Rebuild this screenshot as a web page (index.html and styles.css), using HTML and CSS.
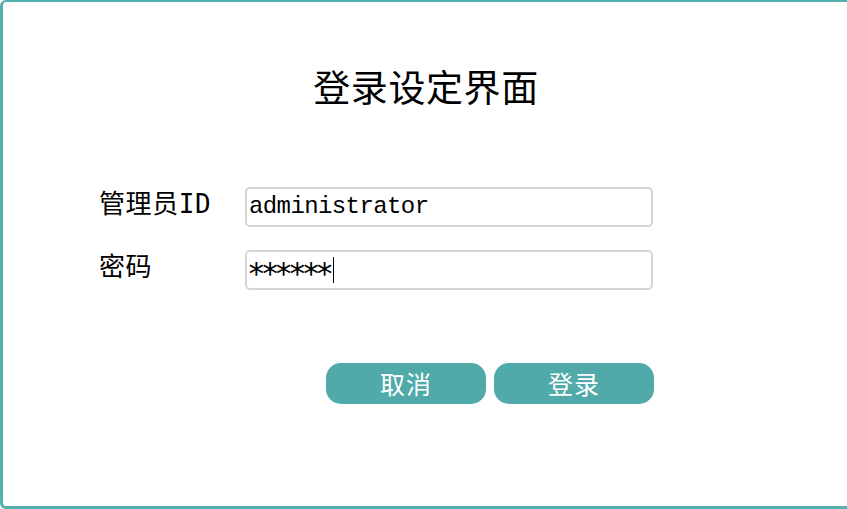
FILE: index.html
```html
<!DOCTYPE html>
<html lang="zh-CN">
<head>
<meta charset="utf-8">
<title>登录设定界面</title>
<link rel="stylesheet" href="styles.css">
</head>
<body>
<div class="panel">
  <h1 class="title">登录设定界面</h1>
  <div class="form">
    <div class="row">
      <div class="label">管理员ID</div>
      <div class="field">administrator</div>
    </div>
    <div class="row">
      <div class="label">密码</div>
      <div class="field"><span class="stars">******</span><span class="caret"></span></div>
    </div>
    <div class="actions">
      <div class="btn">取消</div>
      <div class="btn">登录</div>
    </div>
  </div>
</div>
</body>
</html>
```

FILE: styles.css
```css
html, body {
  margin: 0;
  padding: 0;
  background: #ffffff;
  overflow: hidden;
}
body {
  width: 847px;
  height: 509px;
  font-family: "DejaVu Sans Mono", "Noto Sans CJK SC", sans-serif;
  color: #000;
}
.panel {
  box-sizing: border-box;
  width: 852px;
  height: 509px;
  border-style: solid;
  border-color: #52b1ae;
  border-width: 2px 3px 3px 3px;
  border-radius: 6px;
  background: #fff;
  padding-top: 62px;
}
.title {
  margin: 0;
  font-family: "Noto Sans CJK SC", sans-serif;
  font-weight: 400;
  font-size: 37px;
  line-height: 44px;
  text-align: center;
  letter-spacing: 0.6px;
}
.form {
  margin-top: 79px;
  padding-left: 96px;
  display: flex;
  flex-direction: column;
  gap: 23px;
}
.row {
  display: flex;
  align-items: flex-start;
}
.label {
  width: 146px;
  font-size: 26px;
  line-height: 34px;
  letter-spacing: 0.6px;
}
.field {
  box-sizing: border-box;
  width: 408px;
  height: 40px;
  border: 2px solid #d6d6d6;
  border-radius: 5px;
  padding: 0 2px;
  font-family: "Liberation Mono", monospace;
  font-size: 24px;
  letter-spacing: -0.6px;
  line-height: 36px;
  display: flex;
  align-items: center;
}
.stars {
  font-family: "DejaVu Sans Mono", monospace;
  font-size: 31px;
  letter-spacing: -5px;
  line-height: 31px;
  margin-left: -2px;
  transform: translateY(3px);
}
.caret {
  display: inline-block;
  width: 1px;
  height: 26px;
  background: #000;
  margin-left: 4px;
}
.actions {
  margin-top: 50px;
  padding-left: 227px;
  display: flex;
  gap: 8px;
}
.btn {
  width: 160px;
  height: 41px;
  border-radius: 15px;
  background: #4faaa9;
  color: #fff;
  font-family: "Noto Sans CJK SC", sans-serif;
  font-size: 25px;
  line-height: 41px;
  text-align: center;
  letter-spacing: 1px;
}
```
